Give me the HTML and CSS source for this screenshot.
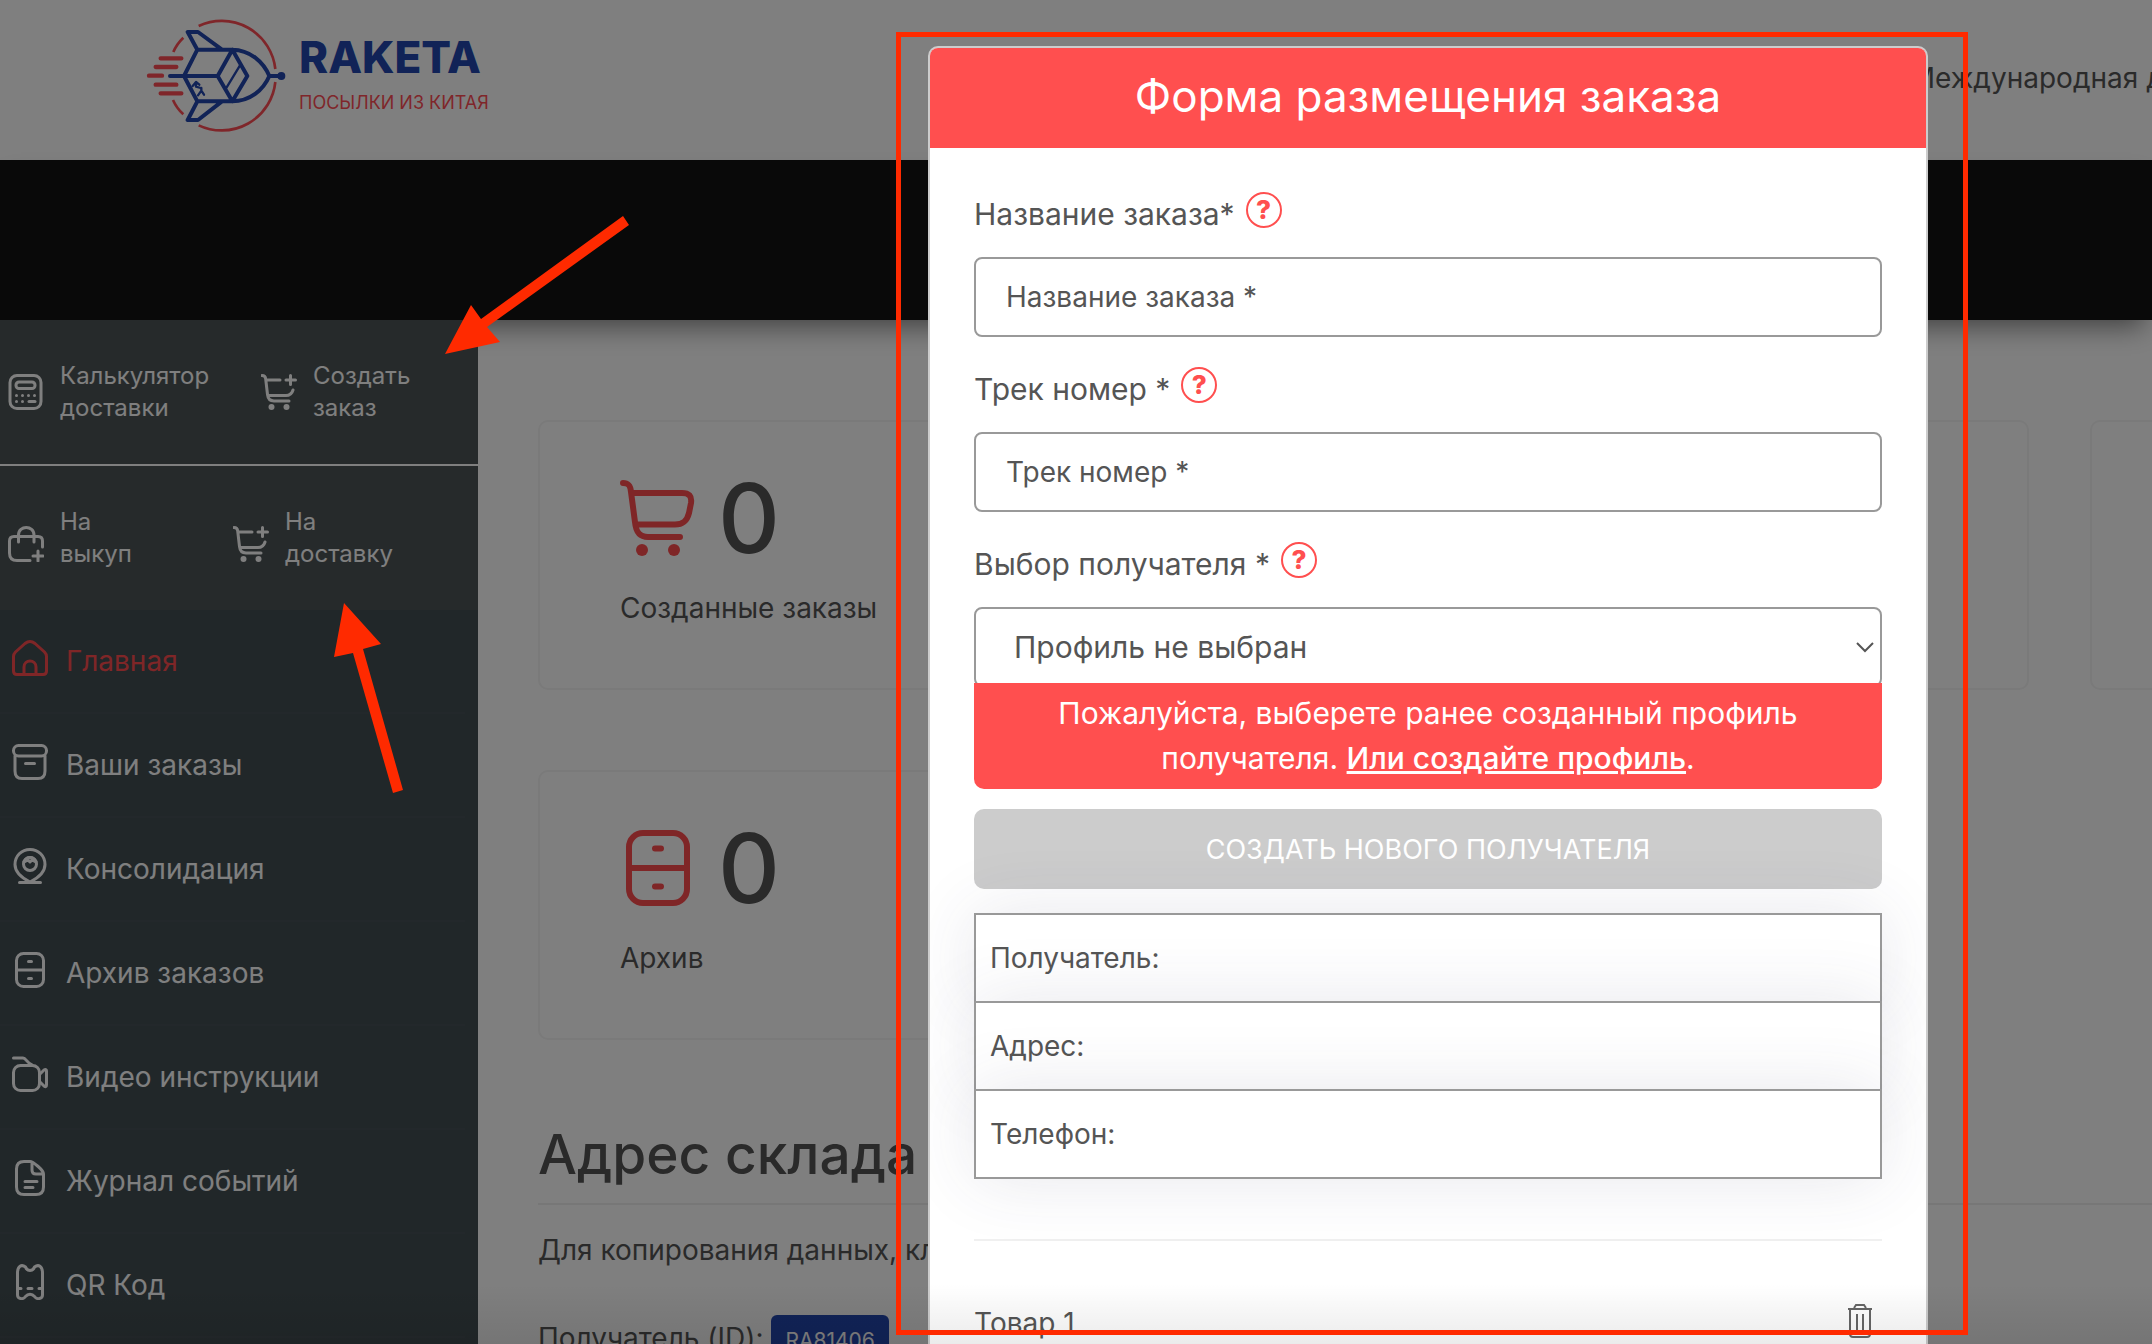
FILE: index.html
```html
<!DOCTYPE html>
<html lang="ru">
<head>
    <meta charset="UTF-8">
    <meta name="viewport" content="width=device-width, initial-scale=1.0">
    <title>Raketa - личный кабинет</title>
    <link rel="stylesheet" href="styles.css">
</head>
<body>
    <svg class="sprite" aria-hidden="true">
        <symbol id="icon-cart-plus" viewBox="0 0 36 36">
            <path d="M1 1.500C3.500 1.500 4.500 2.500 4.700 5L6.500 20.500C7 25 9 27 13 27H28M5.500 6H19M7 21.500H25C29 21.500 31 19.500 32 16M29.500 1.500V10.500M25 6H34.500"/>
            <circle class="dot" cx="10.500" cy="33" r="3"/>
            <circle class="dot" cx="25.500" cy="33" r="3"/>
        </symbol>
    </svg>

    <header class="header">
        <a class="logo" href="#">
            <svg class="logo-icon" viewBox="48 57 420 342" aria-hidden="true">
                <g fill="none" stroke="#ff4d55" stroke-width="8">
                    <path d="M206 78A162 162 0 0 1 436 207M436 246A162 162 0 0 1 206 376M160 113Q140 132 130 156M129 300Q140 325 160 343"/>
                    <path stroke-width="13" stroke-linecap="round" d="M92 175H154M77 201H139M57 227H96M77 254H139M92 280H154"/>
                </g>
                <g fill="none" stroke="#2346ae" stroke-width="12" stroke-linecap="round" stroke-linejoin="round">
                    <path d="M120 228H263L307 304H202L162 228L202 149H307L263 228M307 149L352 228L307 304M307 149C360 150 400 185 418 228C400 270 360 304 307 304M202 149L173 96H204L276 149M202 304L173 360H204L276 304M418 228H450"/>
                    <path stroke-width="7" d="M330 196L290 262M188 258L198 246L208 254M198 248V260L212 264M204 286L214 272L222 284M214 272V264"/>
                    <circle cx="454" cy="228" r="6"/>
                </g>
            </svg>
            <span class="logo-text">
                <span class="logo-name">RAKETA</span>
                <span class="logo-slogan">ПОСЫЛКИ ИЗ КИТАЯ</span>
            </span>
        </a>
        <a class="header-link" href="#">Международная доставка</a>
    </header>
    <div class="topbar"></div>

    <div class="layout">
        <aside class="sidebar">
            <div class="actions">
                <a class="action" href="#">
                    <svg class="icon" viewBox="0 0 36 36" aria-hidden="true">
                        <rect x="2" y="1.500" width="31" height="33" rx="7"/>
                        <rect x="8" y="8" width="19" height="6.500" rx="3"/>
                        <path stroke-dasharray="0 6" d="M8.500 21.500H28M8.500 27.500H17"/>
                        <path d="M21 27.500H27"/>
                    </svg>
                    <span>Калькулятор<br>доставки</span>
                </a>
                <a class="action" href="#">
                    <svg class="icon" aria-hidden="true"><use href="#icon-cart-plus"/></svg>
                    <span>Создать<br>заказ</span>
                </a>
            </div>
            <div class="actions actions-sub">
                <a class="action" href="#">
                    <svg class="icon" viewBox="0 0 36 36" aria-hidden="true">
                        <path d="M22 34.500H9C4 34.500 1.500 32 1.500 27V15C1.500 12 3 10.500 6 10.500H30C33 10.500 34.500 12 34.500 15V21M10.500 16V9C10.500 -1 26 -1 26 9V16M30 25V35M25 30H35"/>
                    </svg>
                    <span>На<br>выкуп</span>
                </a>
                <a class="action" href="#">
                    <svg class="icon" aria-hidden="true"><use href="#icon-cart-plus"/></svg>
                    <span>На<br>доставку</span>
                </a>
            </div>

            <nav class="menu">
                <a class="menu-item active" href="#">
                    <svg class="icon" viewBox="0 0 36 36" aria-hidden="true"><path d="M1.500 31V16.500C1.500 14.500 2 13.500 3.500 12L13 3.500C16.500 .8 19.500 .8 23 3.500L32.500 12C34 13.500 34.500 14.500 34.500 16.500V31C34.500 33.500 33.500 34.500 31 34.500H5C2.500 34.500 1.500 33.500 1.500 31ZM12 34V27C12 19 24 19 24 27V34"/></svg>
                    <span>Главная</span>
                </a>
                <a class="menu-item" href="#">
                    <svg class="icon" viewBox="0 0 36 36" aria-hidden="true"><rect x="1.500" y="1.500" width="33" height="10.500" rx="5"/><path d="M3 12V27C3 32 5 34.500 10 34.500H26C31 34.500 33 32 33 27V12M13.500 19.500H22.500"/></svg>
                    <span>Ваши заказы</span>
                </a>
                <a class="menu-item" href="#">
                    <svg class="icon" viewBox="0 0 36 36" aria-hidden="true"><path d="M18 34C12 31 3 25 3 16.500C3 8 9.500 1.500 18 1.500S33 8 33 16.500C33 25 24 31 18 34ZM7.500 34.500H28.500"/><circle cx="18" cy="16" r="6.500"/><path d="M12 14C15 8 21 8 24 14L20 12L18 14L16 12Z"/></svg>
                    <span>Консолидация</span>
                </a>
                <a class="menu-item" href="#">
                    <svg class="icon" viewBox="0 0 36 36" aria-hidden="true"><rect x="4.500" y="1.500" width="27" height="33" rx="7"/><path d="M5 18H31M16.500 9.500H19.500M16.500 26.500H19.500"/></svg>
                    <span>Архив заказов</span>
                </a>
                <a class="menu-item" href="#">
                    <svg class="icon" viewBox="0 0 36 36" aria-hidden="true"><rect x="1.500" y="9.500" width="26" height="25" rx="7"/><path d="M1.500 2H11C14 2 15 7 20 9M28 18L32 14C33.500 13 34.500 13.500 34.500 15V29C34.500 31 33.500 31 32 30L28 26"/></svg>
                    <span>Видео инструкции</span>
                </a>
                <a class="menu-item" href="#">
                    <svg class="icon" viewBox="0 0 36 36" aria-hidden="true"><path d="M12 1.500H18C21 1.500 31.500 10 31.500 14V27C31.500 32 29 34.500 24 34.500H12C7 34.500 4.500 32 4.500 27V9C4.500 4 7 1.500 12 1.500ZM20 2V10C20 13 21.500 14 24 14H31M13 21.500H25M13 27.500H21"/></svg>
                    <span>Журнал событий</span>
                </a>
                <a class="menu-item" href="#">
                    <svg class="icon" viewBox="0 0 36 36" aria-hidden="true"><path d="M5.500 31V9C5.500 2 9.500 0 13.500 3C15 7.500 21 7.500 22.500 3C26.500 0 30.500 2 30.500 9V31C30.500 35 25 36 22.500 32.500C20 29.500 16 29.500 13.500 32.500C11 36 5.500 35 5.500 31ZM6 24.500H9M16 24.500H20M27 24.500H30"/></svg>
                    <span>QR Код</span>
                </a>
            </nav>
        </aside>

        <main class="content">
            <div class="cards">
                <section class="card">
                    <div class="card-top">
                        <svg class="card-icon" viewBox="0 0 76 76" aria-hidden="true">
                            <path d="M3 3C9 3 10.500 6 11 12L15 42C16 53 20 57 28 57H60M12 13H62C69 13 72 16 71 23L69 33C67 41 63 44.500 55 44.500H16"/>
                            <circle class="dot" cx="22" cy="70" r="6"/>
                            <circle class="dot" cx="54" cy="70" r="6"/>
                        </svg>
                        <span class="card-value">0</span>
                    </div>
                    <div class="card-label">Созданные заказы</div>
                </section>
                <section class="card"></section>
                <section class="card"></section>
                <section class="card">
                    <div class="card-top">
                        <svg class="card-icon" viewBox="0 0 76 76" aria-hidden="true">
                            <rect x="9" y="3" width="58" height="70" rx="14"/>
                            <path d="M9 38H67M35 18.500H41M35 56.500H41"/>
                        </svg>
                        <span class="card-value">0</span>
                    </div>
                    <div class="card-label">Архив</div>
                </section>
            </div>

            <h2 class="title">Адрес склада</h2>
            <p class="hint">Для копирования данных, кликните по ним</p>
            <p class="hint">Получатель (ID): <button class="badge" type="button">RA81406</button></p>
        </main>
    </div>

    <div class="backdrop">
        <form class="modal" role="dialog" aria-labelledby="modal-title">
            <h1 class="modal-title" id="modal-title">Форма размещения заказа</h1>
            <div class="modal-body">
                <div class="field">
                    <div class="field-head">
                        <label for="order-name">Название заказа*</label>
                        <button class="help" type="button">?</button>
                    </div>
                    <input class="control" id="order-name" type="text" placeholder="Название заказа *">
                </div>
                <div class="field">
                    <div class="field-head">
                        <label for="track">Трек номер *</label>
                        <button class="help" type="button">?</button>
                    </div>
                    <input class="control" id="track" type="text" placeholder="Трек номер *">
                </div>
                <div class="field field-profile">
                    <div class="field-head">
                        <label for="profile">Выбор получателя *</label>
                        <button class="help" type="button">?</button>
                    </div>
                    <div class="select-wrap">
                        <select class="control" id="profile">
                            <option>Профиль не выбран</option>
                        </select>
                        <svg class="chevron" viewBox="0 0 18 12" aria-hidden="true"><path d="M1 2L9 10L17 2"/></svg>
                    </div>
                    <p class="alert">Пожалуйста, выберете ранее созданный профиль получателя. <a href="#">Или создайте профиль</a>.</p>
                </div>
                <button class="create" type="button">СОЗДАТЬ НОВОГО ПОЛУЧАТЕЛЯ</button>
                <ul class="recipient">
                    <li>Получатель:</li>
                    <li>Адрес:</li>
                    <li>Телефон:</li>
                </ul>
                <div class="goods">
                    <span>Товар 1</span>
                    <button class="remove" type="button" aria-label="Удалить товар">
                        <svg viewBox="0 0 26 36" aria-hidden="true"><path d="M1 6H25M7 5L9 2H17L19 5M3 6V31C3 33 4 34 6 34H20C22 34 23 33 23 31V6M10 11V28M16 11V28"/></svg>
                    </button>
                </div>
            </div>
        </form>
    </div>

    <div class="fade"></div>

    <!-- annotations over the page -->
    <div class="frame"></div>
    <svg class="arrow arrow-create" viewBox="0 0 184 140" aria-hidden="true">
        <path d="M0 138L26 89L36 103L178 0L184 9L42 111L55 126Z"/>
    </svg>
    <svg class="arrow arrow-delivery" viewBox="0 0 70 190" aria-hidden="true">
        <path d="M10 0L47 41L29 46L69 187L59 190L19 50L0 54Z"/>
    </svg>
</body>
</html>
```

FILE: styles.css
```css
* {
    box-sizing: border-box;
}
body {
    margin: 0;
    height: 100vh;
    overflow: hidden;
    position: relative;
    font-family: Inter, "Open Sans", sans-serif;
    font-size: 28px;
    color: #555;
    background: #fff;
}
a {
    color: inherit;
    text-decoration: none;
}
button, input, select {
    font-family: inherit;
    font-size: inherit;
    color: inherit;
}
.sprite {
    display: none;
}

/* header */
.header {
    height: 160px;
    padding: 0 0 0 146px;
    display: flex;
    justify-content: space-between;
    overflow: hidden;
}
.logo {
    display: flex;
    gap: 13px;
    padding-top: 19px;
}
.logo-icon {
    width: 140px;
    height: 114px;
}
.logo-text {
    display: flex;
    flex-direction: column;
    padding-top: 16px;
}
.logo-name {
    font-size: 44px;
    line-height: 44px;
    font-weight: 800;
    color: #2346ae;
}
.logo-slogan {
    margin-top: 12px;
    font-size: 18px;
    line-height: 24px;
    color: #ff4d55;
}
.header-link {
    margin-right: -120px;
    padding-top: 60px;
    line-height: 36px;
    white-space: nowrap;
}
.topbar {
    height: 160px;
    background: #121212;
    box-shadow: 0 14px 26px -8px rgba(0, 0, 0, 0.5);
}

/* sidebar */
.layout {
    display: flex;
}
.sidebar {
    position: relative;
    flex: none;
    width: 478px;
    min-height: 100vh;
    background: #424e53;
    color: #fff;
}
.actions {
    display: grid;
    grid-template-columns: 253px 1fr;
    height: 144px;
    padding-left: 8px;
    background: #4d5556;
}
.actions-sub {
    grid-template-columns: 225px 1fr;
    height: 146px;
    border-top: 2px solid #fff;
}
.action {
    display: flex;
    align-items: center;
    gap: 16px;
    font-size: 24px;
    line-height: 32px;
}
.icon {
    flex: none;
    width: 36px;
    height: 36px;
    fill: none;
    stroke: currentColor;
    stroke-width: 3;
    stroke-linecap: round;
    stroke-linejoin: round;
}
.dot {
    fill: currentColor;
    stroke: none;
}
.actions-sub .icon {
    margin-top: 12px;
}
.menu-item {
    display: flex;
    align-items: center;
    gap: 18px;
    height: 104px;
    margin-right: 13px;
    padding-left: 12px;
    border-bottom: 2px solid #475156;
}
.menu-item .icon {
    margin-bottom: 6px;
}
.menu-item.active {
    color: #ff4d4f;
}

/* dashboard */
.content {
    flex: 1;
    min-width: 0;
    padding: 100px 0 0 60px;
}
.cards {
    display: grid;
    grid-template-columns: repeat(3, calc(50% - 92px));
    grid-auto-rows: 270px;
    gap: 80px 61px;
}
.card {
    padding: 48px 80px;
    border: 2px solid #f4f4f4;
    border-radius: 10px;
}
.card-top {
    display: flex;
    align-items: center;
    gap: 22px;
    height: 96px;
}
.card-icon {
    width: 76px;
    height: 76px;
    color: #ff4d4f;
    fill: none;
    stroke: currentColor;
    stroke-width: 6;
    stroke-linecap: round;
}
.card-value {
    font-size: 96px;
    line-height: 96px;
    font-weight: 500;
}
.card-label {
    margin-top: 24px;
    line-height: 36px;
}
.title {
    margin: 80px 0 20px;
    padding-bottom: 15px;
    border-bottom: 2px solid #eee;
    font-size: 55px;
    line-height: 68px;
    font-weight: 500;
}
.hint {
    margin: 0 0 38px;
    line-height: 50px;
    white-space: nowrap;
}
.badge {
    height: 50px;
    padding: 0 14px;
    border: 0;
    border-radius: 6px;
    background: #2346ae;
    color: #fff;
    font-size: 21px;
    vertical-align: middle;
}

/* modal */
.backdrop {
    position: absolute;
    inset: 0;
    padding: 46px 224px 0 928px;
    background: rgba(0, 0, 0, 0.5);
    overflow: hidden;
}
.modal {
    min-height: 100vh;
    border: 2px solid #ccc;
    border-radius: 10px;
    overflow: hidden;
    background: #fff;
}
.modal-title {
    margin: 0;
    padding-bottom: 4px;
    background: #ff4f4f;
    color: #fff;
    font-size: 44px;
    line-height: 96px;
    font-weight: 400;
    text-align: center;
}
.modal-body {
    padding: 44px;
}
.field {
    margin-bottom: 30px;
}
.field-profile {
    margin-bottom: 20px;
}
.field-head {
    display: flex;
    align-items: flex-start;
    gap: 11px;
    height: 45px;
    margin-bottom: 20px;
    font-size: 30px;
    line-height: 45px;
}
.help {
    width: 36px;
    height: 36px;
    padding: 0;
    border: 2px solid #ff4f4f;
    border-radius: 50%;
    background: none;
    color: #ff4f4f;
    font-size: 26px;
    line-height: 32px;
    font-weight: 800;
}
.control {
    display: block;
    width: 100%;
    height: 80px;
    padding: 0 30px;
    border: 2px solid #999;
    border-radius: 8px;
    background: #fff;
    appearance: none;
}
.control::placeholder {
    color: #555;
    opacity: 1;
}
.select-wrap {
    position: relative;
}
.select-wrap .control {
    padding: 0 38px;
    font-size: 30px;
}
.chevron {
    position: absolute;
    right: 8px;
    top: 34px;
    width: 18px;
    height: 12px;
    fill: none;
    stroke: #555;
    stroke-width: 2;
}
.alert {
    position: relative;
    margin: -4px 0 0;
    padding: 8px 40px;
    border-radius: 0 0 10px 10px;
    background: #ff4f4f;
    color: #fff;
    font-size: 30px;
    line-height: 45px;
    text-align: center;
}
.alert a {
    font-weight: 500;
    text-decoration: underline;
}
.create {
    display: block;
    width: 100%;
    height: 80px;
    border: 0;
    border-radius: 10px;
    background: #ccc;
    color: #fff;
    font-size: 27px;
}
.recipient {
    margin: 24px 0 60px;
    padding: 0;
    list-style: none;
}
.recipient li {
    position: relative;
    height: 90px;
    padding-left: 14px;
    border: 2px solid #999;
    background: #fff;
    box-shadow: 0 0 70px rgba(60, 60, 100, 0.12);
    line-height: 86px;
}
.recipient li + li {
    margin-top: -2px;
}
.goods {
    display: flex;
    justify-content: space-between;
    padding-top: 58px;
    border-top: 2px solid #f0f0f0;
    line-height: 48px;
}
.remove {
    width: 26px;
    height: 36px;
    margin: 4px 9px 0 0;
    padding: 0;
    border: 0;
    background: none;
}
.remove svg {
    display: block;
    fill: none;
    stroke: #666;
    stroke-width: 2;
}
.fade {
    position: absolute;
    inset: auto 0 0;
    height: 60px;
    background: linear-gradient(rgba(0, 0, 0, 0), rgba(0, 0, 0, 0.08));
}

/* annotations */
.frame {
    position: absolute;
    inset: 32px 184px 9px 896px;
    border: 5px solid #ff2a00;
}
.arrow {
    position: absolute;
    fill: #ff2a00;
}
.arrow-create {
    left: 445px;
    top: 216px;
    width: 184px;
    height: 140px;
}
.arrow-delivery {
    left: 334px;
    top: 603px;
    width: 70px;
    height: 190px;
}
```
